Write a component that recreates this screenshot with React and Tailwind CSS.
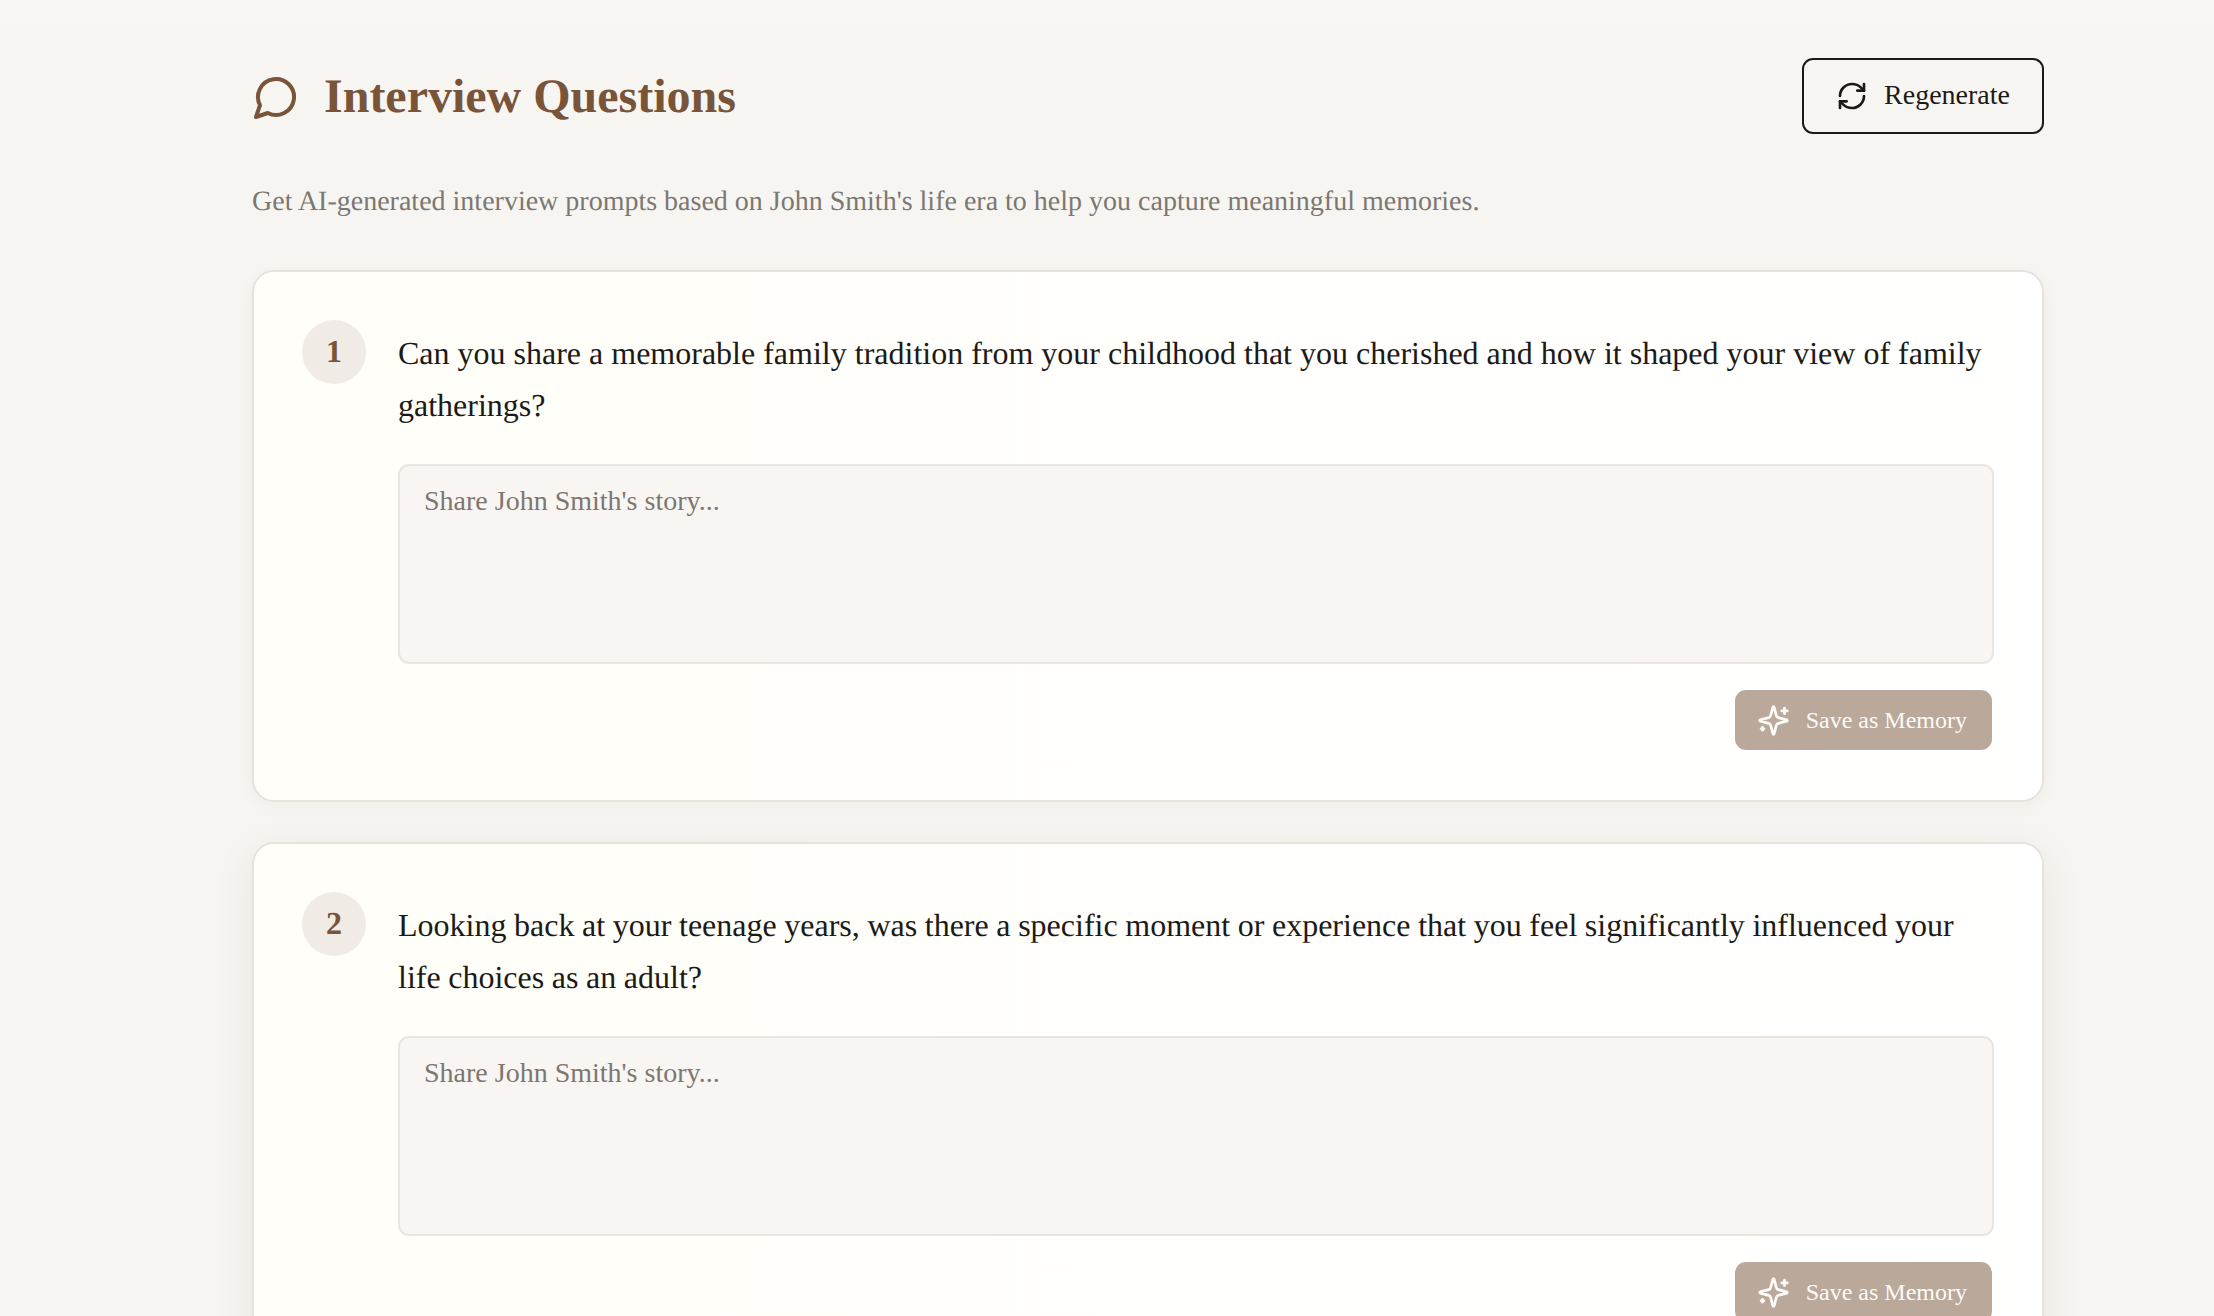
import React from "react";
import { RefreshCw } from "lucide-react";

const questions = [
  {
    text: "Can you share a memorable family tradition from your childhood that you cherished and how it shaped your view of family gatherings?",
    spacing: "",
  },
  {
    text: "Looking back at your teenage years, was there a specific moment or experience that you feel significantly influenced your life choices as an adult?",
    spacing: "[word-spacing:-0.4px]",
  },
];

const serif = "font-['Liberation_Serif','Times_New_Roman',serif]";

const ChatIcon = () => (
  <svg
    width="48"
    height="48"
    viewBox="0 0 24 24"
    fill="none"
    stroke="currentColor"
    strokeWidth="2"
    strokeLinecap="round"
    strokeLinejoin="round"
    className="text-[#7a5439]"
  >
    <path d="M7.9 20A9 9 0 1 0 4 16.1L2 22Z" />
  </svg>
);

// star with a plus top right and a tiny plus bottom left
const SparkleIcon = () => (
  <svg
    width="33"
    height="33"
    viewBox="0 0 24 24"
    fill="none"
    stroke="currentColor"
    strokeWidth="2"
    strokeLinecap="round"
    strokeLinejoin="round"
  >
    <path d="M9.937 15.5A2 2 0 0 0 8.5 14.063l-6.135-1.582a.5.5 0 0 1 0-.962L8.5 9.936A2 2 0 0 0 9.937 8.5l1.582-6.135a.5.5 0 0 1 .963 0L14.063 8.5A2 2 0 0 0 15.5 9.937l6.135 1.581a.5.5 0 0 1 0 .964L15.5 14.063a2 2 0 0 0-1.437 1.437l-1.582 6.135a.5.5 0 0 1-.963 0z" />
    <path d="M20 3v4" />
    <path d="M22 5h-4" />
    <path d="M4 17v2" />
    <path d="M5 18H3" />
  </svg>
);

const QuestionCard = ({ number, question, lifted }) => (
  <div
    className={`rounded-[22px] border-2 border-[#e6e2dc] bg-gradient-to-r from-[#fffef8] to-white px-12 pb-[50px] pt-12 ${
      lifted ? "shadow-[0_10px_40px_rgba(50,45,35,0.08)]" : "shadow-[0_4px_16px_rgba(50,45,35,0.04)]"
    }`}
  >
    <div className="flex gap-8">
      <div className="flex h-16 w-16 shrink-0 items-center justify-center rounded-full bg-[#f0ebe5] pb-[2px] text-[32px] font-bold text-[#7a5439]">
        {number}
      </div>
      <div className="min-w-0 flex-1">
        <p className={`pt-[7px] text-[32px] leading-[52px] text-[#1c1a17] ${question.spacing}`}>{question.text}</p>
        <textarea
          rows={3}
          placeholder="Share John Smith's story..."
          className={`${serif} mt-[33px] block h-[200px] w-full resize-none rounded-[11px] border-2 border-[#e9e6e1] bg-[#f8f5f2] px-6 py-[15px] text-[28px] leading-[39px] text-[#1c1a17] outline-none placeholder:text-[#7c7771]`}
        />
        <div className="mt-[26px] flex justify-end pr-[2px]">
          <button className="flex h-[60px] items-center gap-4 rounded-[11px] bg-[#baa89b] pl-[22px] pr-[25px] text-[24px] text-[#fdfbf8]">
            <SparkleIcon />
            Save as Memory
          </button>
        </div>
      </div>
    </div>
  </div>
);

export default function App() {
  return (
    <div
      className={`${serif} h-[1316px] overflow-hidden bg-gradient-to-b from-[#f9f6f3] to-[#f6f5f1] to-[15%] [text-rendering:geometricPrecision]`}
    >
      <div className="ml-[252px] w-[1792px] pt-[58px]">
        <div className="flex items-center justify-between">
          <div className="flex items-center gap-6 pt-[1px]">
            <ChatIcon />
            <h1 className="text-[48px] font-bold leading-[72px] text-[#7a5439]">Interview Questions</h1>
          </div>
          <button className="flex h-[76px] items-center gap-4 rounded-[11px] border-2 border-[#1c1a17] px-8 text-[28px] text-[#1c1a17]">
            <RefreshCw size={32} strokeWidth={2} />
            <span className="pb-[2px]">Regenerate</span>
          </button>
        </div>
        <p className="mt-[48px] text-[28px] leading-[39px] text-[#7c7771]">
          Get AI-generated interview prompts based on John Smith's life era to help you capture meaningful memories.
        </p>
        <div className="mt-[49px] flex flex-col gap-10">
          {questions.map((q, i) => (
            <QuestionCard key={i} number={i + 1} question={q} lifted={i === 1} />
          ))}
        </div>
      </div>
    </div>
  );
}
